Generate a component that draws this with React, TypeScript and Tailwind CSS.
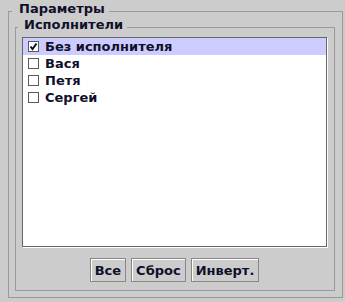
import React from "react";

function Check({ checked }: { checked: boolean }) {
  return (
    <span className="w-[11px] h-[11px] border border-[#5a5a5a] bg-white flex items-center justify-center shrink-0">
      {checked && (
        <svg width="9" height="9" viewBox="0 0 9 9">
          <path d="M1.5 4.5 L3.5 7 L7.5 1.5" stroke="#101028" strokeWidth="2" fill="none" />
        </svg>
      )}
    </span>
  );
}

const items = [
  { name: "Без исполнителя", checked: true, selected: true },
  { name: "Вася", checked: false, selected: false },
  { name: "Петя", checked: false, selected: false },
  { name: "Сергей", checked: false, selected: false },
];

export default function App() {
  return (
    <div className="w-[345px] h-[302px] bg-[#cccccc] pl-[8px] pr-[2px] pt-[3px] pb-[4px] font-['DejaVu_Sans',sans-serif] font-bold text-[13px] text-[#10102a]">
      <fieldset className="h-full border border-[#999999] pl-[6px] pr-[7px] pb-[6px] pt-0 flex flex-col min-w-0">
        <legend className="ml-[-3px] pl-[7px] pr-[4px] pb-[5px] leading-[11px]">Параметры</legend>
        <fieldset className="flex-1 border border-[#999999] pl-[6px] pr-[7px] pb-[8px] pt-0 flex flex-col min-w-0">
          <legend className="ml-[-4px] pl-[6px] pr-[4px] pb-[5px] leading-[11px]">Исполнители</legend>
          <div className="mt-[2px] flex-1 border border-[#666666] bg-white shadow-[1px_1px_0_#ffffff]">
            {items.map((it) => (
              <div
                key={it.name}
                className={`h-[17px] flex items-center pl-[5px] gap-[6px] leading-[15px] ${it.selected ? "bg-[#ccccff]" : ""}`}
              >
                <Check checked={it.checked} />
                <span>{it.name}</span>
              </div>
            ))}
          </div>
          <div className="mt-[11px] flex justify-center gap-[5px]">
            {["Все", "Сброс", "Инверт."].map((b) => (
              <button
                key={b}
                className="h-[24px] px-[4px] border border-[#888888] bg-[#cccccc] shadow-[inset_1px_1px_0_#ffffff] leading-[15px] text-[#10102a]"
              >
                {b}
              </button>
            ))}
          </div>
        </fieldset>
      </fieldset>
    </div>
  );
}
